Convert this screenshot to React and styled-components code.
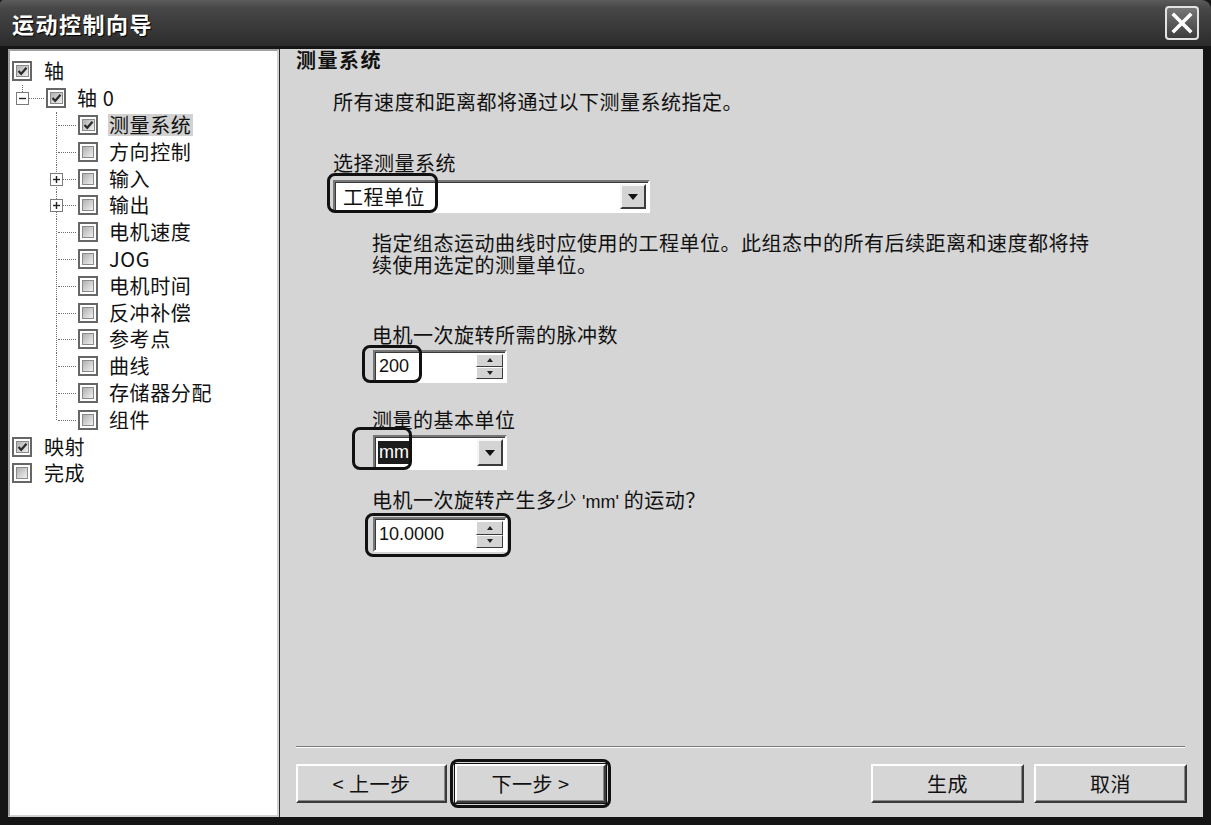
import styled, { createGlobalStyle, css } from "styled-components";

const CJK = `"Noto Sans CJK SC", "Noto Sans", sans-serif`;
const LATIN = `"Liberation Sans", Arial, sans-serif`;

const GlobalStyle = createGlobalStyle`
  *, *::before, *::after { box-sizing: border-box; }
  html, body { margin: 0; padding: 0; background: #151515; }
  body { font-family: ${CJK}; }
`;

const Window = styled.div`
  width: 1211px;
  height: 825px;
  display: flex;
  flex-direction: column;
  background: #151515;
  font-family: ${CJK};
  color: #111;
  overflow: hidden;
`;

const TitleBar = styled.div`
  height: 46px;
  flex: none;
  display: flex;
  align-items: center;
  justify-content: space-between;
  padding: 0 12px;
  background: linear-gradient(#5c5c5c 0%, #474747 18%, #3b3b3b 55%, #2b2b2b 100%);
  border-top-left-radius: 4px;
  border-top-right-radius: 9px;
`;

const Title = styled.h1`
  margin: 0;
  font-size: 22px;
  font-weight: 700;
  letter-spacing: 1.5px;
  color: #fff;
  text-shadow: 1px 1px 1px #000;
`;

const CloseButton = styled.button`
  width: 34px;
  height: 34px;
  padding: 0;
  border: 2px solid #e2e2e2;
  border-radius: 4px;
  background: linear-gradient(#777, #3d3d3d);
  display: flex;
  align-items: center;
  justify-content: center;
`;

const Body = styled.div`
  flex: 1;
  min-height: 0;
  display: flex;
  padding: 3px 8px 8px 8px;
`;

const TreePanel = styled.div`
  width: 271px;
  flex: none;
  background: #fff;
  border: 2px solid;
  border-color: #a0a0a0 #d2d2d2 #d2d2d2 #a0a0a0;
  padding-top: 7px;
  font-size: 20px;
  letter-spacing: 0.6px;
`;

const Row = styled.div`
  height: 26.8px;
  display: flex;
  align-items: center;
  padding-left: ${(p) => [2, 12, 46][p.$level]}px;
`;

const Connector = styled.span`
  position: relative;
  align-self: stretch;
  flex: none;
  width: ${(p) => p.$w}px;
  &::before {
    content: "";
    position: absolute;
    left: 0;
    top: 0;
    height: ${(p) => (p.$last ? "50%" : "100%")};
    border-left: 1px dotted #707070;
  }
  &::after {
    content: "";
    position: absolute;
    left: 2px;
    right: 2px;
    top: 50%;
    border-top: 1px dotted #707070;
  }
`;

const Expander = styled.span`
  position: absolute;
  z-index: 1;
  left: -6px;
  top: 50%;
  margin-top: -6px;
  width: 13px;
  height: 13px;
  border: 1px solid #7a7a7a;
  background: #fff;
  display: flex;
  align-items: center;
  justify-content: center;
`;

const Check = styled.span`
  width: 20px;
  height: 20px;
  flex: none;
  border: 2px solid #666;
  padding: 2px;
  background: #fff;
  display: flex;
`;

const CheckFace = styled.span`
  flex: 1;
  border: 1px solid #8a8a8a;
  background: linear-gradient(135deg, #b0b0b0, #f0f0f0);
  display: flex;
  align-items: center;
  justify-content: center;
`;

const NodeLabel = styled.span`
  margin-left: ${(p) => (p.$level === 0 ? 11 : 10)}px;
  padding: 0 2px 0 1px;
  line-height: 22px;
  white-space: nowrap;
  background: ${(p) => (p.$selected ? "#d2d2d2" : "transparent")};
`;

const MainPanel = styled.div`
  flex: 1;
  display: flex;
  flex-direction: column;
  background: #d5d5d5;
  border-left: 1px solid #2a2a2a;
  padding: 0 18px 14px 16px;
  font-size: 20px;
  letter-spacing: 0.5px;
`;

const Heading = styled.h2`
  margin: 0;
  font-size: 20px;
  font-weight: 700;
  line-height: 22px;
  letter-spacing: 1.5px;
`;

const Text = styled.p`
  margin: ${(p) => p.$top}px 0 0 ${(p) => p.$indent}px;
  line-height: ${(p) => p.$lh || 24}px;
  white-space: nowrap;
`;

const Latin = styled.span`
  font-family: ${LATIN};
  font-size: 18px;
  letter-spacing: 0;
`;

const Marked = styled.div`
  position: relative;
  width: fit-content;
  margin: ${(p) => p.$top}px 0 0 ${(p) => p.$indent}px;
`;

const Mark = styled.span`
  position: absolute;
  left: ${(p) => p.$x}px;
  top: ${(p) => p.$y}px;
  width: ${(p) => p.$w}px;
  height: ${(p) => p.$h}px;
  border: 3px solid #111;
  border-radius: 8px;
  pointer-events: none;
`;

const Field = styled.div`
  width: ${(p) => p.$w}px;
  height: ${(p) => p.$h}px;
  display: flex;
  background: #fff;
  border: 2px solid;
  border-color: #767676 #fff #fff #767676;
  box-shadow: inset 1px 1px 0 #3a3a3a;
  padding: 2px 2px 2px 3px;
`;

const FieldText = styled.span`
  flex: 1;
  display: flex;
  align-items: center;
  padding-left: ${(p) => (p.$latin ? 0 : 4)}px;
  font-family: ${(p) => (p.$latin ? LATIN : CJK)};
  font-size: ${(p) => (p.$latin ? 18 : 20)}px;
  letter-spacing: ${(p) => (p.$latin ? 0 : 0.5)}px;
`;

const Value = styled.span`
  line-height: 23px;
  padding: 0 1px;
  ${(p) =>
    p.$selected &&
    css`
      background: #1c1c1c;
      color: #fff;
    `}
`;

const DropButton = styled.span`
  width: 26px;
  flex: none;
  background: #d4d4d4;
  border: 2px solid;
  border-color: #f6f6f6 #3c3c3c #3c3c3c #f6f6f6;
  display: flex;
  align-items: center;
  justify-content: center;
`;

const SpinButtons = styled.span`
  width: 27px;
  flex: none;
  display: flex;
  flex-direction: column;
`;

const SpinButton = styled.span`
  flex: 1;
  background: #d4d4d4;
  border: 1px solid;
  border-color: #fff #3c3c3c #3c3c3c #fff;
  display: flex;
  align-items: center;
  justify-content: center;
`;

const Footer = styled.div`
  margin-top: auto;
`;

const Separator = styled.div`
  height: 2px;
  border-top: 1px solid #7c7c7c;
  border-bottom: 1px solid #fafafa;
`;

const ButtonRow = styled.div`
  display: flex;
  align-items: center;
  gap: 8px;
  margin: 16px -2px 0 0;
`;

const Spacer = styled.div`
  flex: 1;
`;

const Button = styled.button`
  width: ${(p) => p.$w}px;
  height: 39px;
  padding: 0;
  font-family: ${CJK};
  font-size: 20px;
  letter-spacing: 0.5px;
  color: #111;
  background: #d6d6d6;
  border: 2px solid;
  border-color: #fff #3a3a3a #3a3a3a #fff;
  box-shadow: inset -1px -1px 0 #8a8a8a;
  margin-left: ${(p) => p.$gap || 0}px;
  ${(p) =>
    p.$default &&
    css`
      outline: 1px solid #111;
    `}
`;

const tree = [
  { level: 0, label: "轴", checked: true },
  { level: 1, label: "轴 0", checked: true, expander: "minus", last: true },
  { level: 2, label: "测量系统", checked: true, selected: true },
  { level: 2, label: "方向控制" },
  { level: 2, label: "输入", expander: "plus" },
  { level: 2, label: "输出", expander: "plus" },
  { level: 2, label: "电机速度" },
  { level: 2, label: "JOG" },
  { level: 2, label: "电机时间" },
  { level: 2, label: "反冲补偿" },
  { level: 2, label: "参考点" },
  { level: 2, label: "曲线" },
  { level: 2, label: "存储器分配" },
  { level: 2, label: "组件", last: true },
  { level: 0, label: "映射", checked: true },
  { level: 0, label: "完成" },
];

function CheckBox({ checked }) {
  return (
    <Check>
      <CheckFace>
        {checked && (
          <svg width="11" height="10" viewBox="0 0 11 10">
            <path d="M1.5 5 L4.2 7.8 L9.5 1.8" fill="none" stroke="#2a2a2a" strokeWidth="2.2" />
          </svg>
        )}
      </CheckFace>
    </Check>
  );
}

function TreeNode({ node }) {
  return (
    <Row $level={node.level}>
      {node.level > 0 && (
        <Connector $w={node.level === 1 ? 24 : 22} $last={node.last}>
          {node.expander && (
            <Expander>
              <svg width="9" height="9" viewBox="0 0 9 9">
                <path d="M1 4.5 H8" stroke="#222" strokeWidth="1.4" />
                {node.expander === "plus" && <path d="M4.5 1 V8" stroke="#222" strokeWidth="1.4" />}
              </svg>
            </Expander>
          )}
        </Connector>
      )}
      <CheckBox checked={node.checked} />
      <NodeLabel $level={node.level} $selected={node.selected}>
        {node.label}
      </NodeLabel>
    </Row>
  );
}

function DownArrow() {
  return (
    <svg width="10" height="6" viewBox="0 0 10 6">
      <path d="M0 0 H10 L5 6 Z" fill="#111" />
    </svg>
  );
}

function SpinArrows() {
  return (
    <SpinButtons>
      <SpinButton>
        <svg width="6" height="4" viewBox="0 0 6 4">
          <path d="M0 4 H6 L3 0 Z" fill="#222" />
        </svg>
      </SpinButton>
      <SpinButton>
        <svg width="6" height="4" viewBox="0 0 6 4">
          <path d="M0 0 H6 L3 4 Z" fill="#222" />
        </svg>
      </SpinButton>
    </SpinButtons>
  );
}

export default function App() {
  return (
    <Window>
      <GlobalStyle />
      <TitleBar>
        <Title>运动控制向导</Title>
        <CloseButton>
          <svg width="22" height="22" viewBox="0 0 22 22">
            <path d="M3 3 L19 19 M19 3 L3 19" stroke="#fff" strokeWidth="3.6" strokeLinecap="square" />
          </svg>
        </CloseButton>
      </TitleBar>
      <Body>
        <TreePanel>
          {tree.map((node) => (
            <TreeNode key={node.label} node={node} />
          ))}
        </TreePanel>
        <MainPanel>
          <Heading>测量系统</Heading>
          <Text $top={19} $indent={37}>所有速度和距离都将通过以下测量系统指定。</Text>
          <Text $top={37} $indent={37}>选择测量系统</Text>
          <Marked $top={5} $indent={37}>
            <Field $w={317} $h={33}>
              <FieldText>
                <Value>工程单位</Value>
              </FieldText>
              <DropButton>
                <DownArrow />
              </DropButton>
            </Field>
            <Mark $x={-6} $y={-7} $w={111} $h={40} />
          </Marked>
          <Text $top={19} $indent={76} $lh={22}>
            指定组态运动曲线时应使用的工程单位。此组态中的所有后续距离和速度都将持
            <br />
            续使用选定的测量单位。
          </Text>
          <Text $top={47} $indent={76}>电机一次旋转所需的脉冲数</Text>
          <Marked $top={3} $indent={77}>
            <Field $w={134} $h={33}>
              <FieldText $latin>
                <Value>200</Value>
              </FieldText>
              <SpinArrows />
            </Field>
            <Mark $x={-11} $y={-5} $w={60} $h={38} />
          </Marked>
          <Text $top={25} $indent={76}>测量的基本单位</Text>
          <Marked $top={3} $indent={77}>
            <Field $w={134} $h={35}>
              <FieldText $latin>
                <Value $selected>mm</Value>
              </FieldText>
              <DropButton>
                <DownArrow />
              </DropButton>
            </Field>
            <Mark $x={-21} $y={-8} $w={60} $h={43} />
          </Marked>
          <Text $top={18} $indent={76}>
            电机一次旋转产生多少 <Latin>'mm'</Latin> 的运动？
          </Text>
          <Marked $top={3} $indent={77}>
            <Field $w={134} $h={35}>
              <FieldText $latin>
                <Value>10.0000</Value>
              </FieldText>
              <SpinArrows />
            </Field>
            <Mark $x={-8} $y={-4} $w={146} $h={44} />
          </Marked>
          <Footer>
            <Separator />
            <ButtonRow>
              <Button $w={151}>&lt; 上一步</Button>
              <Marked $top={0} $indent={0}>
                <Button $w={151} $default>
                  下一步 &gt;
                </Button>
                <Mark $x={-5} $y={-5} $w={161} $h={49} />
              </Marked>
              <Spacer />
              <Button $w={153}>生成</Button>
              <Button $w={153} $gap={2}>取消</Button>
            </ButtonRow>
          </Footer>
        </MainPanel>
      </Body>
    </Window>
  );
}
